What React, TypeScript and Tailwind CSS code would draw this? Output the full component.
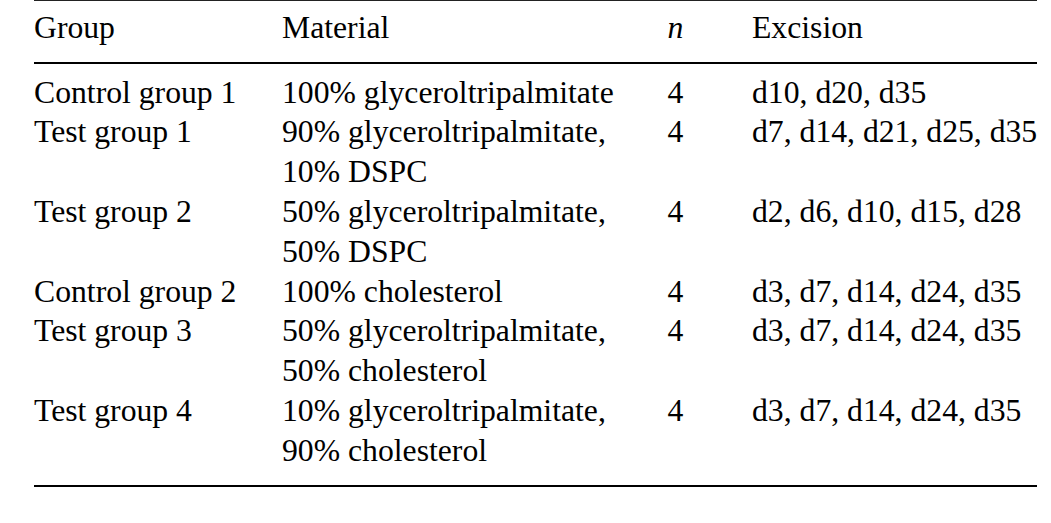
const rows: { group: string; material: string[]; n: string; excision: string }[] = [
  { group: "Control group 1", material: ["100% glyceroltripalmitate"], n: "4", excision: "d10, d20, d35" },
  { group: "Test group 1", material: ["90% glyceroltripalmitate,", "10% DSPC"], n: "4", excision: "d7, d14, d21, d25, d35" },
  { group: "Test group 2", material: ["50% glyceroltripalmitate,", "50% DSPC"], n: "4", excision: "d2, d6, d10, d15, d28" },
  { group: "Control group 2", material: ["100% cholesterol"], n: "4", excision: "d3, d7, d14, d24, d35" },
  { group: "Test group 3", material: ["50% glyceroltripalmitate,", "50% cholesterol"], n: "4", excision: "d3, d7, d14, d24, d35" },
  { group: "Test group 4", material: ["10% glyceroltripalmitate,", "90% cholesterol"], n: "4", excision: "d3, d7, d14, d24, d35" },
];

const cols = "grid grid-cols-[248px_370px_47px_1fr]";

export default function App() {
  return (
    <div
      className="h-[523px] w-[1051px] overflow-hidden bg-white text-black"
      style={{ fontFamily: '"Liberation Serif", "Times New Roman", serif' }}
    >
      <div className="ml-[34px] w-[1003px] text-[31.7px] leading-[39.8px]">
        <div className="h-[1.3px] bg-[#222]" />
        <div className={`${cols} pt-[7px] pb-[14px]`}>
          <div>Group</div>
          <div>Material</div>
          <div className="text-center italic">n</div>
          <div className="pl-[53px]">Excision</div>
        </div>
        <div className="h-[1.5px] bg-black" />
        <div className="pt-[9px] pb-[14px]">
          {rows.map((r) => (
            <div key={r.group} className={cols}>
              <div className="whitespace-nowrap">{r.group}</div>
              <div className="whitespace-nowrap">
                {r.material.map((m) => (
                  <div key={m}>{m}</div>
                ))}
              </div>
              <div className="text-center">{r.n}</div>
              <div className="whitespace-nowrap pl-[53px]">{r.excision}</div>
            </div>
          ))}
        </div>
        <div className="h-[2px] bg-black" />
      </div>
    </div>
  );
}
